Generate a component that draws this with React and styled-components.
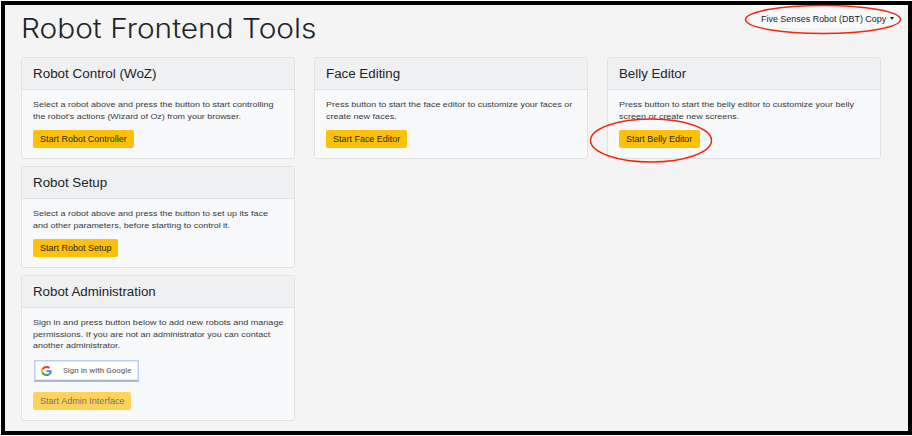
import React, { useLayoutEffect, useRef } from "react";
import styled, { createGlobalStyle } from "styled-components";

const Global = createGlobalStyle`
  * { box-sizing: border-box; }
  body { margin: 0; background: #fff; font-family: "Liberation Sans", Arial, sans-serif; }
`;

const Page = styled.div`
  position: relative;
  width: 912px;
  height: 436px;
  padding: 1px 0 1px 1px;
  overflow: hidden;
`;

const Frame = styled.div`
  height: 434px;
  border: 4px solid #000;
  background: #f4f4f4;
  padding: 0 0 0 16px;
`;

const TopBar = styled.header`
  display: flex;
  justify-content: space-between;
  height: 52px;
`;

const Title = styled.h1`
  margin: 6px 0 0;
  font-family: "Inter", "Liberation Sans", sans-serif;
  font-weight: 300;
  font-size: 26.5px;
  line-height: 34px;
  color: #212529;
`;

const RobotSelect = styled.div`
  display: flex;
  align-items: center;
  gap: 4px;
  width: 152px;
  height: 23px;
  padding: 4px 0 0 9px;
  margin-right: 4px;
  background: #f8f9fa;
  color: #212529;
  font-size: 8.3px;
  line-height: 12px;
`;

const Caret = styled.i`
  border: 2.5px solid transparent;
  border-top: 3px solid #212529;
  border-bottom: 0;
  margin-top: -1px;
`;

const Columns = styled.main`
  display: grid;
  grid-template-columns: repeat(3, 274px);
  column-gap: 19px;
  align-items: start;
`;

const Column = styled.section`
  display: flex;
  flex-direction: column;
  gap: 7px;
`;

const Card = styled.article`
  height: ${(p) => p.$height}px;
  border: 1px solid #dfe1e3;
  border-radius: 3px;
  background: #f8f9fa;
  overflow: hidden;
`;

const CardHeader = styled.h2`
  margin: 0;
  height: 32px;
  padding: 9px 11px 0;
  border-bottom: 1px solid #dfe0e2;
  background: #eff0f2;
  color: #212529;
  font-weight: 400;
  font-size: 12px;
  line-height: 15px;
`;

const CardBody = styled.div`
  display: flex;
  flex-direction: column;
  align-items: flex-start;
  padding: 9px 11px 0;
`;

const Copy = styled.p`
  margin: 0 0 8px;
  color: #35393d;
  font-size: 8px;
  line-height: 11.7px;
`;

const Button = styled.button`
  display: flex;
  align-items: center;
  width: ${(p) => p.$width}px;
  height: 18px;
  padding: 0 7px;
  border: 0;
  border-radius: 2px;
  background: #ffc107;
  color: #212529;
  font: 8.3px/12px "Liberation Sans", Arial, sans-serif;
  &:disabled { opacity: 0.65; }
`;

const GoogleButton = styled.button`
  display: flex;
  align-items: center;
  gap: 11px;
  width: 105px;
  height: 22px;
  margin: 0 0 10px 1px;
  padding: 0 0 0 6px;
  border: 1px solid #b9d1f8;
  border-bottom: 2px solid #a9b9d6;
  background: #fff;
  box-shadow: inset 0 0 0 0.5px #b9d1f8;
  color: #757575;
  font: 500 7.4px/10px Roboto, sans-serif;
`;

const Line = styled.span`
  display: block;
  width: ${(p) => p.$width}px;
  text-align: left;
  white-space: nowrap;
`;

const Stretch = styled.span`
  display: inline-block;
  transform-origin: 0 50%;
`;

const Annotation = styled.svg`
  position: absolute;
  inset: 0;
  pointer-events: none;
`;

function Text({ width, children }) {
  const ref = useRef(null);
  useLayoutEffect(() => {
    const el = ref.current;
    el.style.transform = `scaleX(${width / el.offsetWidth})`;
  }, [width, children]);
  return (
    <Line $width={width}>
      <Stretch ref={ref}>{children}</Stretch>
    </Line>
  );
}

function GoogleLogo() {
  return (
    <svg width="11" height="10" viewBox="0 0 48 48" preserveAspectRatio="none">
      <path fill="#EA4335" d="M24 9.5c3.54 0 6.71 1.22 9.21 3.6l6.85-6.85C35.9 2.38 30.47 0 24 0 14.62 0 6.51 5.38 2.56 13.22l7.98 6.19C12.43 13.72 17.74 9.5 24 9.5z" />
      <path fill="#4285F4" d="M46.98 24.55c0-1.57-.15-3.09-.38-4.55H24v9.02h12.94c-.58 2.96-2.26 5.48-4.78 7.18l7.73 6c4.51-4.18 7.09-10.36 7.09-17.65z" />
      <path fill="#FBBC05" d="M10.53 28.59c-.48-1.45-.76-2.99-.76-4.59s.27-3.14.76-4.59l-7.98-6.19C.92 16.46 0 20.12 0 24c0 3.88.92 7.54 2.56 10.78l7.97-6.19z" />
      <path fill="#34A853" d="M24 48c6.48 0 11.93-2.13 15.89-5.81l-7.73-6c-2.15 1.45-4.92 2.3-8.16 2.3-6.26 0-11.57-4.22-13.47-9.91l-7.98 6.19C6.51 42.62 14.62 48 24 48z" />
    </svg>
  );
}

const columns = [
  [
    {
      title: ["Robot Control (WoZ)", 123],
      height: 102,
      copy: [
        ["Select a robot above and press the button to start controlling", 240.5],
        ["the robot's actions (Wizard of Oz) from your browser.", 208],
      ],
      action: ["Start Robot Controller", 86.5, 101],
    },
    {
      title: ["Robot Setup", 74.5],
      height: 102,
      copy: [
        ["Select a robot above and press the button to set up its face", 235],
        ["and other parameters, before starting to control it.", 197.5],
      ],
      action: ["Start Robot Setup", 71.5, 85],
    },
    {
      title: ["Robot Administration", 123],
      height: 146,
      copy: [
        ["Sign in and press button below to add new robots and manage", 250.5],
        ["permissions. If you are not an administrator you can contact", 237.5],
        ["another administrator.", 86.5],
      ],
      google: true,
      disabled: true,
      action: ["Start Admin Interface", 84, 98],
    },
  ],
  [
    {
      title: ["Face Editing", 74.5],
      height: 102,
      copy: [
        ["Press button to start the face editor to customize your faces or", 246],
        ["create new faces.", 71],
      ],
      action: ["Start Face Editor", 67, 81],
    },
  ],
  [
    {
      title: ["Belly Editor", 67.5],
      height: 102,
      copy: [
        ["Press button to start the belly editor to customize your belly", 234.5],
        ["screen or create new screens.", 120],
      ],
      action: ["Start Belly Editor", 66.5, 81],
    },
  ],
];

function ToolCard({ title, height, copy, google, disabled, action }) {
  return (
    <Card $height={height}>
      <CardHeader>
        <Text width={title[1]}>{title[0]}</Text>
      </CardHeader>
      <CardBody>
        <Copy>
          {copy.map(([text, width]) => (
            <Text key={text} width={width}>{text}</Text>
          ))}
        </Copy>
        {google && (
          <GoogleButton>
            <GoogleLogo />
            <Text width={69}>Sign in with Google</Text>
          </GoogleButton>
        )}
        <Button $width={action[2]} disabled={disabled}>
          <Text width={action[1]}>{action[0]}</Text>
        </Button>
      </CardBody>
    </Card>
  );
}

export default function App() {
  return (
    <Page>
      <Global />
      <Frame>
        <TopBar>
          <Title>
            <Text width={295}>Robot Frontend Tools</Text>
          </Title>
          <RobotSelect>
            <Text width={125}>Five Senses Robot (DBT) Copy</Text>
            <Caret />
          </RobotSelect>
        </TopBar>
        <Columns>
          {columns.map((cards, i) => (
            <Column key={i}>
              {cards.map((card) => (
                <ToolCard key={card.title[0]} {...card} />
              ))}
            </Column>
          ))}
        </Columns>
      </Frame>
      <Annotation width="912" height="436" fill="none" stroke="#f5270f" strokeWidth="1.5">
        <ellipse cx="823" cy="19.5" rx="77.5" ry="14" />
        <ellipse cx="651" cy="140.5" rx="60.5" ry="21.5" />
      </Annotation>
    </Page>
  );
}
